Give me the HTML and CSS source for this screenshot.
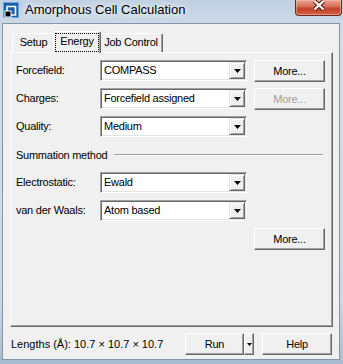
FILE: index.html
```html
<!DOCTYPE html>
<html lang="en">
<head>
    <meta charset="UTF-8">
    <title>Amorphous Cell Calculation</title>
    <link rel="stylesheet" href="styles.css">
</head>
<body>
<div class="window">
    <div class="titlebar">
        <svg class="app-icon" width="16" height="16" viewBox="0 0 16 16">
            <rect width="16" height="16" fill="#1b5ead"/>
            <rect x="0.5" y="0.5" width="15" height="15" fill="none" stroke="#6aa6e6"/>
            <path d="M4 4.5h8.5v8.5h-8.5z" fill="none" stroke="#fff" stroke-width="1.6"/>
            <rect x="2" y="9" width="6" height="6" fill="#000" stroke="#fff" stroke-width="1"/>
        </svg>
        <span class="title">Amorphous Cell Calculation</span>
        <div class="close">
            <svg width="14" height="11" viewBox="0 0 14 11">
                <path d="M2.5 1l9 8.5M11.5 1l-9 8.5" stroke="#5b1c12" stroke-width="4.4"/>
                <path d="M2.5 1l9 8.5M11.5 1l-9 8.5" stroke="#fff" stroke-width="2.4"/>
            </svg>
        </div>
    </div>
    <div class="client">
        <div class="tabs">
            <div class="tab tab-setup">Setup</div>
            <div class="tab tab-energy active"><span class="focus">Energy</span></div>
            <div class="tab tab-job">Job Control</div>
        </div>
        <div class="panel">
            <div class="row">
                <label>Forcefield:</label>
                <div class="combo"><span>COMPASS</span><i class="drop"><svg width="7" height="4"><polygon points="0,0 7,0 3.5,4"/></svg></i></div>
                <button class="btn more">More...</button>
            </div>
            <div class="row">
                <label>Charges:</label>
                <div class="combo"><span>Forcefield assigned</span><i class="drop"><svg width="7" height="4"><polygon points="0,0 7,0 3.5,4"/></svg></i></div>
                <button class="btn more disabled">More...</button>
            </div>
            <div class="row">
                <label>Quality:</label>
                <div class="combo"><span>Medium</span><i class="drop"><svg width="7" height="4"><polygon points="0,0 7,0 3.5,4"/></svg></i></div>
            </div>
            <div class="group">
                <span>Summation method</span>
                <div class="rule"></div>
            </div>
            <div class="row">
                <label>Electrostatic:</label>
                <div class="combo"><span>Ewald</span><i class="drop"><svg width="7" height="4"><polygon points="0,0 7,0 3.5,4"/></svg></i></div>
            </div>
            <div class="row">
                <label>van der Waals:</label>
                <div class="combo"><span>Atom based</span><i class="drop"><svg width="7" height="4"><polygon points="0,0 7,0 3.5,4"/></svg></i></div>
            </div>
            <div class="row row-end">
                <button class="btn more">More...</button>
            </div>
        </div>
        <div class="footer">
            <span class="lengths">Lengths (Å): 10.7 × 10.7 × 10.7</span>
            <div class="split">
                <button class="btn run">Run</button>
                <button class="btn arrow"><svg width="5" height="3"><polygon points="0,0 5,0 2.5,3"/></svg></button>
            </div>
            <button class="btn help">Help</button>
        </div>
    </div>
</div>
</body>
</html>
```

FILE: styles.css
```css
* {
    margin: 0;
    padding: 0;
    box-sizing: border-box;
}

body {
    font-family: "Liberation Sans", Arial, sans-serif;
    font-size: 11px;
    color: #000;
}

.window {
    width: 343px;
    height: 364px;
    padding: 0 3px 4px 2px;
    display: flex;
    flex-direction: column;
    background: linear-gradient(#c0d0e2, #d4dee9 40px, #cbd7e4 300px, #a9bbcf);
}

/* title bar */
.titlebar {
    height: 23px;
    display: flex;
    align-items: flex-start;
    padding-left: 1px;
}

.app-icon {
    margin-top: 2px;
    flex: none;
}

.title {
    margin-left: 6px;
    font-size: 13px;
    line-height: 19px;
    color: #000;
    text-shadow: 0 0 5px #fff, 0 0 8px rgba(255, 255, 255, 0.9);
}

.close {
    margin-left: auto;
    margin-right: -2px;
    width: 47px;
    height: 16px;
    border: 1px solid #6a2a20;
    border-top: 0;
    border-radius: 0 0 4px 4px;
    background: linear-gradient(#e9a592, #d8735c 40%, #c2402a 60%, #d2634a);
    box-shadow: inset 0 0 0 1px rgba(255, 200, 190, 0.5);
    display: flex;
    justify-content: center;
}

/* client area */
.client {
    flex: 1;
    border: 1px solid #8595a8;
    background: #f0f0f0;
    display: flex;
    flex-direction: column;
    letter-spacing: -0.25px;
}

.tabs {
    height: 28px;
    padding: 7px 0 0 9px;
    display: flex;
    align-items: flex-end;
}

.tab {
    height: 19px;
    line-height: 16px;
    text-align: center;
    border-top: 1px solid #fff;
    border-left: 1px solid #fff;
    border-right: 1px solid #696969;
    border-radius: 2px 2px 0 0;
    box-shadow: inset -1px 0 #a0a0a0;
    background: #f0f0f0;
}

.tab-setup {
    width: 43px;
}

.tab-energy {
    width: 44px;
}

.tab-job {
    width: 64px;
}

.tab.active {
    width: 48px;
    height: 22px;
    margin: 0 -2px -1px;
    position: relative;
    z-index: 1;
    padding: 1px 1px 0 1px;
}

.tab.active .focus {
    display: block;
    height: 19px;
    line-height: 15px;
    border: 1px dotted #000;
}

.panel {
    height: 275px;
    margin: 0 6px 0 7px;
    border-top: 1px solid #fff;
    border-left: 1px solid #fff;
    border-right: 1px solid #696969;
    border-bottom: 1px solid #696969;
    box-shadow: inset -1px -1px #a0a0a0;
    padding: 7px 7px 0 5px;
    display: flex;
    flex-direction: column;
    gap: 7px;
}

.row {
    height: 21px;
    display: flex;
    align-items: flex-start;
}

.row label {
    width: 84px;
    line-height: 21px;
}

.row-end {
    justify-content: flex-end;
}

.combo {
    width: 147px;
    height: 21px;
    border-top: 1px solid #a0a0a0;
    border-left: 1px solid #a0a0a0;
    border-right: 1px solid #fff;
    border-bottom: 1px solid #fff;
    box-shadow: inset 1px 1px #696969, inset -1px -1px #e3e3e3;
    background: #fff;
    display: flex;
    align-items: center;
    padding: 1px 1px 1px 3px;
}

.combo span {
    flex: 1;
    line-height: 17px;
}

.drop {
    width: 16px;
    height: 17px;
    background: #f0f0f0;
    border-top: 1px solid #e3e3e3;
    border-left: 1px solid #e3e3e3;
    border-right: 1px solid #696969;
    border-bottom: 1px solid #696969;
    box-shadow: inset 1px 1px #fff, inset -1px -1px #a0a0a0;
    display: flex;
    align-items: center;
    justify-content: center;
}

.drop svg,
.arrow svg {
    display: block;
}

.btn {
    font: inherit;
    letter-spacing: inherit;
    color: #000;
    background: #f0f0f0;
    border-top: 1px solid #fff;
    border-left: 1px solid #fff;
    border-right: 1px solid #696969;
    border-bottom: 1px solid #696969;
    box-shadow: inset -1px -1px #a0a0a0;
    height: 22px;
    text-align: center;
}

.more {
    width: 71px;
    margin-left: 7px;
}

.more.disabled {
    color: #a0a0a0;
}

.group {
    height: 21px;
    display: flex;
    align-items: center;
}

.group .rule {
    flex: 1;
    margin: 0 2px 0 7px;
    border-top: 1px solid #a0a0a0;
    border-bottom: 1px solid #fff;
}

/* bottom bar */
.footer {
    flex: 1;
    display: flex;
    align-items: flex-start;
    padding: 6px 7px 0 8px;
}

.lengths {
    line-height: 22px;
    letter-spacing: 0;
}

.split {
    margin-left: auto;
    display: flex;
}

.run {
    width: 59px;
}

.arrow {
    width: 10px;
    display: flex;
    align-items: center;
    justify-content: center;
}

.help {
    width: 70px;
    margin-left: 8px;
}
```
